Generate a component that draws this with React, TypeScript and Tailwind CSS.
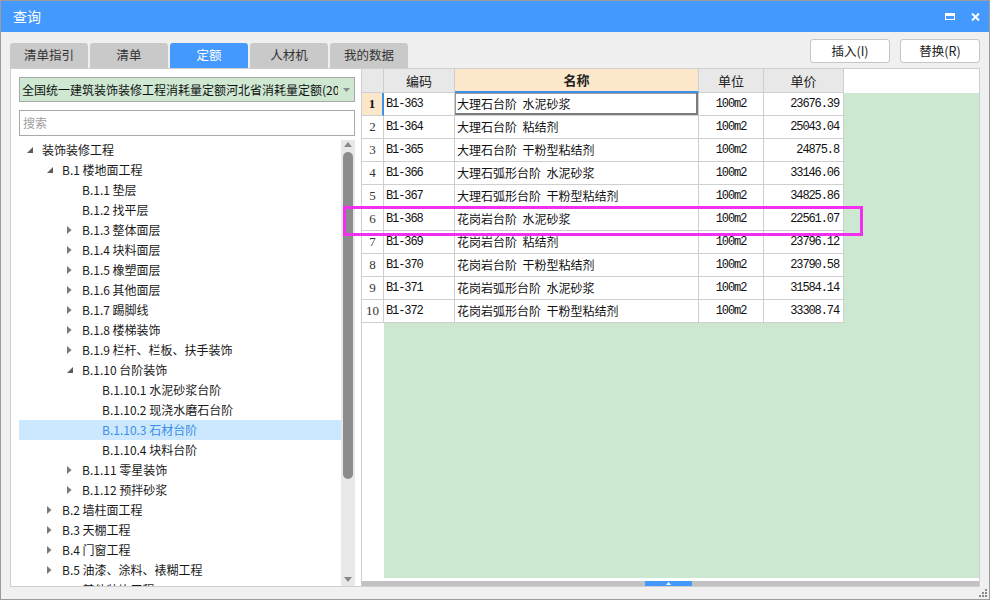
import React from 'react';

type TreeNode = { label: string; level: number; state: 'open' | 'closed' | 'leaf'; selected?: boolean };

const treeNodes: TreeNode[] = [
    { label: '装饰装修工程', level: 0, state: 'open' },
    { label: 'B.1 楼地面工程', level: 1, state: 'open' },
    { label: 'B.1.1 垫层', level: 2, state: 'leaf' },
    { label: 'B.1.2 找平层', level: 2, state: 'leaf' },
    { label: 'B.1.3 整体面层', level: 2, state: 'closed' },
    { label: 'B.1.4 块料面层', level: 2, state: 'closed' },
    { label: 'B.1.5 橡塑面层', level: 2, state: 'closed' },
    { label: 'B.1.6 其他面层', level: 2, state: 'closed' },
    { label: 'B.1.7 踢脚线', level: 2, state: 'closed' },
    { label: 'B.1.8 楼梯装饰', level: 2, state: 'closed' },
    { label: 'B.1.9 栏杆、栏板、扶手装饰', level: 2, state: 'closed' },
    { label: 'B.1.10 台阶装饰', level: 2, state: 'open' },
    { label: 'B.1.10.1 水泥砂浆台阶', level: 3, state: 'leaf' },
    { label: 'B.1.10.2 现浇水磨石台阶', level: 3, state: 'leaf' },
    { label: 'B.1.10.3 石材台阶', level: 3, state: 'leaf', selected: true },
    { label: 'B.1.10.4 块料台阶', level: 3, state: 'leaf' },
    { label: 'B.1.11 零星装饰', level: 2, state: 'closed' },
    { label: 'B.1.12 预拌砂浆', level: 2, state: 'closed' },
    { label: 'B.2 墙柱面工程', level: 1, state: 'closed' },
    { label: 'B.3 天棚工程', level: 1, state: 'closed' },
    { label: 'B.4 门窗工程', level: 1, state: 'closed' },
    { label: 'B.5 油漆、涂料、裱糊工程', level: 1, state: 'closed' },
    { label: 'B.6 其他装饰工程', level: 1, state: 'closed' },
];

const rows = [
    ['B1-363', '大理石台阶  水泥砂浆', '23676.39'],
    ['B1-364', '大理石台阶  粘结剂', '25043.04'],
    ['B1-365', '大理石台阶  干粉型粘结剂', '24875.8'],
    ['B1-366', '大理石弧形台阶  水泥砂浆', '33146.06'],
    ['B1-367', '大理石弧形台阶  干粉型粘结剂', '34825.86'],
    ['B1-368', '花岗岩台阶  水泥砂浆', '22561.07'],
    ['B1-369', '花岗岩台阶  粘结剂', '23796.12'],
    ['B1-370', '花岗岩台阶  干粉型粘结剂', '23790.58'],
    ['B1-371', '花岗岩弧形台阶  水泥砂浆', '31584.14'],
    ['B1-372', '花岗岩弧形台阶  干粉型粘结剂', '33308.74'],
];

const tabs = ['清单指引', '清单', '定额', '人材机', '我的数据'];

const Arrow: React.FC<{ state: TreeNode['state'] }> = ({ state }) => {
    if (state === 'open') {
        return (
            <svg width="6" height="6" viewBox="0 0 6 6" className="ml-[8px]">
                <polygon points="6,0 6,6 0,6" fill="#5c5c5c" />
            </svg>
        );
    }
    if (state === 'closed') {
        return (
            <svg width="5" height="8" viewBox="0 0 5 8" className="ml-[8px]">
                <polygon points="0,0 4.5,4 0,8" fill="#7a7a7a" />
            </svg>
        );
    }
    return null;
};

const TreeRow: React.FC<{ node: TreeNode }> = ({ node }) => (
    <div
        className={`flex h-[20px] shrink-0 items-center whitespace-nowrap ${node.selected ? 'bg-[#cce8ff] text-[#3a8ee6]' : 'text-[#1a1a1a]'}`}
        style={{ paddingLeft: node.level * 20 }}
    >
        <div className="flex h-[20px] w-[23px] shrink-0 items-center">
            <Arrow state={node.state} />
        </div>
        <span className="text-[12px] leading-[20px]">{node.label}</span>
    </div>
);

const App: React.FC = () => {
    const cjk = "font-['Noto_Sans_CJK_SC','Noto_Sans',sans-serif]";
    const mono = "font-['Liberation_Mono','Noto_Sans_CJK_SC',monospace]";

    return (
        <div className={`relative flex h-[600px] w-[990px] flex-col overflow-hidden border border-[#9c9c9c] bg-[#f0f0f0] ${cjk}`}>
            {/* title bar */}
            <div className="flex h-[31px] shrink-0 items-center justify-between bg-[#4499ff] pl-[12px] pr-[9px]">
                <span className="text-[14px] text-white">查询</span>
                <div className="flex items-center gap-[16px]">
                    <div className="h-[7px] w-[10px] border-[1.5px] border-t-[3px] border-white" />
                    <svg width="9" height="8" viewBox="0 0 9 8">
                        <path d="M1 0.5 L8 7.5 M8 0.5 L1 7.5" stroke="white" strokeWidth="2" />
                    </svg>
                </div>
            </div>

            <div className="flex flex-1 flex-col px-[9px]">
                {/* tabs + buttons */}
                <div className="flex h-[36px] shrink-0 items-start justify-between">
                    <div className="flex gap-[2px] pt-[11px]">
                        {tabs.map((t) => (
                            <div
                                key={t}
                                className={`flex h-[25px] w-[78px] items-center justify-center rounded-t-[3px] text-[12.5px] ${t === '定额' ? 'bg-[#4499ff] text-white' : 'bg-[#c9c9c9] text-[#333]'}`}
                            >
                                {t}
                            </div>
                        ))}
                    </div>
                    <div className="flex gap-[10px] pt-[7px]">
                        <button className="h-[24px] w-[80px] rounded-[3px] border border-[#c6c6c6] bg-white text-[12.5px] text-[#222]">插入(I)</button>
                        <button className="h-[24px] w-[80px] rounded-[3px] border border-[#c6c6c6] bg-white text-[12.5px] text-[#222]">替换(R)</button>
                    </div>
                </div>

                {/* main */}
                <div className="flex h-[519px] shrink-0">
                    {/* left panel */}
                    <div className="flex w-[351px] shrink-0 flex-col border border-r-0 border-[#cfcfcf] bg-white pl-[8px]">
                        <div className="mt-[8px] flex h-[25px] w-[336px] shrink-0 items-center border border-[#a9a9a9] bg-[#cee8d2] pl-[2px]">
                            <span className="w-[316px] overflow-hidden whitespace-nowrap text-[12px] text-[#111]">
                                全国统一建筑装饰装修工程消耗量定额河北省消耗量定额(2013)
                            </span>
                            <svg width="7" height="4" viewBox="0 0 7 4" className="ml-[5px]">
                                <polygon points="0,0 7,0 3.5,4" fill="#8a8a8a" />
                            </svg>
                        </div>
                        <div className="mt-[8px] flex h-[26px] w-[336px] shrink-0 items-center border border-[#a9a9a9] pl-[3px] text-[12px] text-[#a0a0a0]">
                            搜索
                        </div>
                        <div className="mt-[4px] flex min-h-0 flex-1 overflow-hidden">
                            <div className="flex w-[322px] shrink-0 flex-col">
                                {treeNodes.map((n) => (
                                    <TreeRow key={n.label} node={n} />
                                ))}
                            </div>
                            <div className="flex w-[14px] shrink-0 flex-col items-center bg-[#e8e8e8] py-[1px]">
                                <svg width="8" height="5" viewBox="0 0 8 5" className="mt-[1px]">
                                    <polygon points="4,0 8,5 0,5" fill="#8a8a8a" />
                                </svg>
                                <div className="mt-[5px] h-[327px] w-[10px] rounded-full bg-[#8c8c8c]" />
                                <div className="flex-1" />
                                <svg width="8" height="5" viewBox="0 0 8 5" className="mb-[3px]">
                                    <polygon points="0,0 8,0 4,5" fill="#8a8a8a" />
                                </svg>
                            </div>
                        </div>
                    </div>

                    {/* right panel: grid */}
                    <div className="flex w-[619px] shrink-0 flex-col border border-[#cfcfcf] bg-white">
                        {/* header */}
                        <div className="flex h-[24px] shrink-0 text-[13px] text-[#222]">
                            <div className="w-[22px] border-r border-b border-[#cfcfcf] bg-[#e8e8e8]" />
                            <div className="flex w-[71px] items-center justify-center border-r border-b border-[#cfcfcf] bg-[#e8e8e8]">编码</div>
                            <div className="flex w-[244px] items-center justify-center border-r border-b-2 border-r-[#cfcfcf] border-b-[#3d8fe8] bg-[#fde7ca] font-bold">名称</div>
                            <div className="flex w-[65px] items-center justify-center border-r border-b border-[#cfcfcf] bg-[#e8e8e8]">单位</div>
                            <div className="flex w-[80px] items-center justify-center border-r border-b border-[#cfcfcf] bg-[#e8e8e8]">单价</div>
                            <div className="flex-1" />
                        </div>
                        {/* body */}
                        <div className="flex min-h-0 flex-1 bg-[#cde8d1]">
                            <div className="flex w-[482px] shrink-0 flex-col">
                                {rows.map((r, i) => (
                                    <div key={r[0]} className="flex h-[23px] shrink-0 bg-white text-[#111]">
                                        <div
                                            className={`flex w-[22px] items-center justify-center border-b font-['Liberation_Serif',serif] text-[13px] ${i === 0 ? 'border-r-2 border-r-[#3d8fe8] border-b-[#cfcfcf] bg-[#fde7ca] font-bold' : 'border-r border-[#cfcfcf] text-[#333]'}`}
                                        >
                                            {i + 1}
                                        </div>
                                        <div className={`flex w-[71px] items-center border-r border-b border-[#cfcfcf] pl-[2px] ${mono} text-[12px] tracking-[-1.1px]`}>
                                            {r[0]}
                                        </div>
                                        <div
                                            className={`flex w-[244px] items-center whitespace-pre border-r border-b border-[#cfcfcf] pl-[2px] text-[12px] ${i === 0 ? 'shadow-[inset_-2px_-2px_0_#7d7d7d,inset_1px_1px_0_#9a9a9a]' : ''}`}
                                        >
                                            {r[1]}
                                        </div>
                                        <div className={`flex w-[65px] items-center justify-center border-r border-b border-[#cfcfcf] ${mono} text-[12px] tracking-[-1.1px]`}>
                                            100m2
                                        </div>
                                        <div className={`flex w-[80px] items-center justify-end border-r border-b border-[#cfcfcf] pr-[4px] ${mono} text-[12px] tracking-[-1.1px]`}>
                                            {r[2]}
                                        </div>
                                    </div>
                                ))}
                                <div className="flex flex-1">
                                    <div className="w-[22px] bg-white" />
                                    <div className="flex-1" />
                                </div>
                            </div>
                            <div className="flex-1" />
                        </div>
                        {/* horizontal scrollbar */}
                        <div className="h-[3px] shrink-0 bg-white" />
                        <div className="flex h-[5px] shrink-0 justify-center bg-[#c2c2c2]">
                            <div className="ml-[-4px] flex w-[47px] items-center justify-center bg-[#4499ff]">
                                <svg width="5" height="3" viewBox="0 0 5 3">
                                    <polygon points="2.5,0 5,3 0,3" fill="white" />
                                </svg>
                            </div>
                        </div>
                    </div>
                </div>
            </div>

            {/* resize grip */}
            <div className="absolute bottom-[2px] right-[2px] grid grid-cols-3 gap-[1px]">
                <div className="h-[2px] w-[2px]" />
                <div className="h-[2px] w-[2px]" />
                <div className="h-[2px] w-[2px] bg-[#8a8a8a]" />
                <div className="h-[2px] w-[2px]" />
                <div className="h-[2px] w-[2px] bg-[#8a8a8a]" />
                <div className="h-[2px] w-[2px] bg-[#8a8a8a]" />
                <div className="h-[2px] w-[2px] bg-[#8a8a8a]" />
                <div className="h-[2px] w-[2px] bg-[#8a8a8a]" />
                <div className="h-[2px] w-[2px] bg-[#8a8a8a]" />
            </div>

            {/* highlight annotation */}
            <div className="pointer-events-none absolute left-[342px] top-[205px] h-[30px] w-[520px] border-[3px] border-[#f22ef0]" />
        </div>
    );
};

export default App;
